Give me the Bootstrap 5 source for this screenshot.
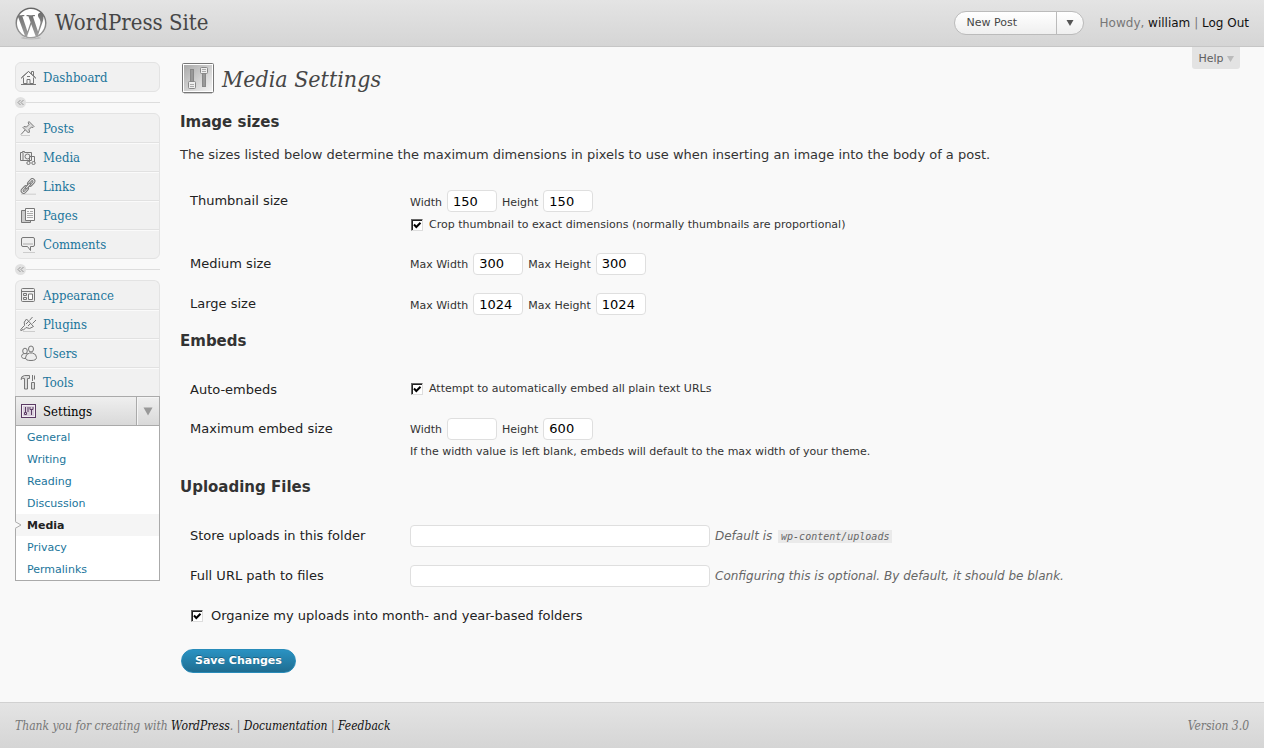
<!DOCTYPE html>
<html lang="en">
<head>
<meta charset="utf-8">
<meta name="viewport" content="width=device-width, initial-scale=1">
<title>Media Settings - WordPress Site</title>
<link rel="stylesheet" href="https://cdn.jsdelivr.net/npm/bootstrap@5.3.0/dist/css/bootstrap.min.css">
<style>
  body { font: 13px/20px Verdana, "DejaVu Sans", sans-serif; color: #333; background: #f9f9f9; }
  a { text-decoration: none; }
  .serif { font-family: Georgia, "DejaVu Serif Condensed", "DejaVu Serif", serif; }
  .bar { background: linear-gradient(#e4e4e4, #d5d5d5); min-height: 47px; padding: 0 15px; }
  .site-bar { border-bottom: 1px solid #c6c6c6; }
  .foot-bar { border-top: 1px solid #d1d1d1; min-height: 46px; color: #777; font-size: 12px; font-style: italic; }
  .foot-bar a { color: #111; }
  .site-title { font-size: 22px; line-height: 32px; color: #464646; }
  .pill { --bs-btn-font-size: 11px; --bs-btn-line-height: 16px; --bs-btn-padding-y: 3px; --bs-btn-padding-x: 12px;
    --bs-btn-color: #464646; --bs-btn-border-color: #bbb; --bs-btn-border-radius: 12px;
    background: linear-gradient(#fff, #efefef); }
  .pill-main { width: 103px; text-align: left; }
  .pill-arrow { --bs-btn-padding-x: 0; width: 28px; }
  .account { font-size: 12px; color: #777; }
  .account a { color: #111; }
  .help-tab { background: #e3e3e3; color: #606060; font-size: 11px; line-height: 16px; padding: 4px 6px 2px; border-radius: 0 0 3px 3px; margin-right: 24px; }

  .side { width: 145px; margin: 15px 20px 0 15px; flex: none; }
  .menu-box { border: 1px solid #e3e3e3; border-radius: 6px; background: #f1f1f1; }
  .menu-box > a, .current > a { color: #21759b; font-size: 13px; line-height: 26px; gap: 6px; padding: 2px 0 0 4px; }
  .menu-box > a + a { border-top: 1px solid #e1e1e1; box-shadow: inset 0 1px #fafafa; }
  .side a.serif svg { width: 17px; height: 17px; flex: none; margin-top: -2px; }
  .menu-open { border-bottom: 0; border-radius: 6px 6px 0 0; }
  .menu-sep { height: 21px; }
  .menu-sep hr { margin: 0; border-color: #ddd; opacity: 1; }
  .menu-sep button { width: 11px; height: 11px; padding: 0; border: 0; border-radius: 50%; background: #e1e1e1; }
  .current { border: 1px solid #aaa; background: linear-gradient(#efefef, #d9d9d9); }
  .current > a { color: #000; }
  .current > button { width: 23px; border: 0; border-left: 1px solid #aaa; background: none; box-shadow: inset 1px 1px #f5f5f5; padding: 0; }
  .submenu { border: 1px solid #aaa; border-top: 0; background: #fff; font-size: 11px; line-height: 20px; }
  .submenu a { color: #21759b; padding: 2px 0 0 11px; position: relative; }
  .submenu a.here { color: #222; background: #f5f5f5; font-weight: bold; }
  .here svg { position: absolute; left: -1px; top: 7px; }

  .page-title { font-size: 23px; line-height: 32px; font-style: italic; color: #464646; margin: 15px 0 10px; }
  h2 { font-size: 15px; line-height: 20px; font-weight: bold; margin: 6px 0 19px; }
  .page-title svg { margin-top: 0; }
  .intro { margin: -6px 0 16px; }
  .form-line { padding: 9px 10px; }
  .form-line > :first-child { width: 220px; flex: none; color: #222; padding-top: 1px; }
  .opt { font-size: 11px; gap: 5px; color: #333; }
  .opt + .opt { margin-top: 2px; }
  .text-in { height: 22px; padding: 1px 5px; border: 1px solid #dfdfdf; border-radius: 4px; background: #fff; font-size: 13px; line-height: 18px; color: #000; }
  .num { width: 50px; }
  .path-in { width: 300px; }
  .tick { appearance: none; width: 12px; height: 12px; margin: 0 1px 0 1px; border: 1px solid; border-color: #666 #ddd #ddd #666;
    box-shadow: inset 1px 1px #222; background: #fff url("data:image/svg+xml,%3Csvg xmlns='http://www.w3.org/2000/svg' viewBox='0 0 10 10'%3E%3Cpath d='M2 4.5 4.3 7 8.5 2.7' fill='none' stroke='%23000' stroke-width='2'/%3E%3C/svg%3E"); flex: none; }
  .hint { font-size: 12px; font-style: italic; color: #666; }
  .hint code { font: italic 10px/14px "DejaVu Sans Mono", monospace; color: #666; background: #eaeaea; padding: 1px 3px; margin-left: 2px; }
  .save { --bs-btn-font-size: 11px; --bs-btn-line-height: 16px; --bs-btn-padding-y: 3px; --bs-btn-padding-x: 13px; --bs-btn-border-radius: 12px;
    --bs-btn-color: #fff; --bs-btn-border-color: #298cba; --bs-btn-font-weight: bold; background: linear-gradient(#2a92c2, #1f6d91); text-shadow: 0 -1px rgba(0,0,0,.3); margin: 14px 0 24px 1px; }
</style>
</head>
<body class="d-flex flex-column min-vh-100">

<header class="bar site-bar d-flex align-items-center">
  <svg class="me-2" width="32" height="33" viewBox="0 0 32 33" aria-hidden="true">
    <defs><linearGradient id="wg" x1="0" y1="0" x2="0" y2="1"><stop offset="0" stop-color="#636363"/><stop offset="1" stop-color="#a2a2a2"/></linearGradient></defs>
    <ellipse cx="16" cy="31" rx="10" ry="1.500" fill="#bbb"/>
    <circle cx="16" cy="16" r="15.600" fill="#fff"/>
    <path transform="translate(.4 .4) scale(1.3)" fill="url(#wg)" d="M21.469 6.825c.84 1.537 1.318 3.3 1.318 5.175 0 3.979-2.156 7.456-5.363 9.325l3.295-9.527c.615-1.54.82-2.771.82-3.864 0-.405-.026-.78-.07-1.11m-7.981.105c.647-.03 1.232-.105 1.232-.105.582-.075.514-.93-.067-.899 0 0-1.755.135-2.88.135-1.064 0-2.85-.15-2.85-.15-.585-.03-.661.855-.075.885 0 0 .54.061 1.125.09l1.68 4.605-2.37 7.08L5.354 6.9c.649-.03 1.234-.1 1.234-.1.585-.075.516-.93-.065-.896 0 0-1.746.138-2.874.138-.2 0-.438-.008-.69-.015C4.911 3.15 8.235 1.215 12 1.215c2.809 0 5.365 1.072 7.286 2.833-.046-.003-.091-.009-.141-.009-1.06 0-1.812.923-1.812 1.914 0 .89.513 1.643 1.06 2.531.411.72.89 1.643.89 2.977 0 .915-.354 1.994-.821 3.479l-1.075 3.585-3.9-11.61.001.014zM12 22.784c-1.059 0-2.081-.153-3.048-.437l3.237-9.406 3.315 9.087c.024.053.05.101.078.149-1.12.393-2.325.609-3.582.609M1.211 12c0-1.564.336-3.05.935-4.39L7.29 21.709C3.694 19.96 1.212 16.271 1.211 12M12 0C5.385 0 0 5.385 0 12s5.385 12 12 12 12-5.385 12-12S18.615 0 12 0"/>
  </svg>
  <a href="#" class="site-title serif me-auto">WordPress Site</a>
  <div class="btn-group me-3">
    <button type="button" class="btn pill pill-main">New Post</button>
    <button type="button" class="btn pill pill-arrow" aria-label="More actions"><svg width="8" height="6" viewBox="0 0 8 6"><path d="M.5 0h7L4 6z" fill="#555"/></svg></button>
  </div>
  <div class="account">Howdy, <a href="#">william</a> | <a href="#">Log Out</a></div>
</header>

<div class="d-flex flex-grow-1">
  <nav class="side" aria-label="Main menu">
    <div class="menu-box">
      <a href="#" class="d-flex align-items-center serif"><svg viewBox="0 0 17 17" fill="#f5f5f5" stroke="#777"><path d="M3.5 8.500v6h10v-6M1 9.500l7.500-7 7.500 7M11.500 5V2.500h2V7"/><path d="M1.500 8.500l7-6 7 6" fill="none"/><path d="M7 14.500v-4h3v4M7 7.500h3M1 15.500h15"/></svg>Dashboard</a>
    </div>
    <div class="menu-sep d-flex align-items-center"><button type="button" aria-label="Collapse menu" class="d-flex align-items-center justify-content-center"><svg width="7" height="7" viewBox="0 0 7 7" fill="none" stroke="#999"><path d="M3.500 1 1 3.500 3.500 6M6.500 1 4 3.500 6.500 6"/></svg></button><hr class="flex-grow-1"></div>
    <div class="menu-box">
      <a href="#" class="d-flex align-items-center serif"><svg viewBox="0 0 17 17" fill="#ddd" stroke="#777"><path d="M1 14.500 5.500 9.500"/><path d="M9 1.500l5 5-1 1-1.500-.5-2.500 2.500.5 2.500-1 1L3 7.500l1-1 2.500.5L9 4.500l-.8-1.700z"/><path d="M1 15.500h9" stroke="#ccc"/></svg>Posts</a>
      <a href="#" class="d-flex align-items-center serif"><svg viewBox="0 0 17 17" fill="#eee" stroke="#777"><path d="M.5 3.500h2v-1h2v1h7v8H.5zM3 3.500v8"/><circle cx="7.500" cy="7.500" r="2.500"/><path d="M9.500 13.500v-6h5v6" fill="none"/><ellipse cx="8.500" cy="14" rx="1.700" ry="1.500"/><ellipse cx="13.500" cy="14" rx="1.700" ry="1.500"/></svg>Media</a>
      <a href="#" class="d-flex align-items-center serif"><svg viewBox="0 0 17 17" fill="none" stroke="#777"><path d="M1 16.200h15" stroke="#ccc"/><g transform="rotate(-48 8 8)"><rect x="-1" y="5.500" width="8.500" height="5" rx="2.500"/><rect x="8.500" y="5.500" width="8.500" height="5" rx="2.500"/><rect x="1" y="7.300" width="4" height="1.500" rx=".7"/><rect x="11" y="7.300" width="4" height="1.500" rx=".7"/><path d="M5 7h6v2H5z" fill="#eee"/></g></svg>Links</a>
      <a href="#" class="d-flex align-items-center serif"><svg viewBox="0 0 17 17" fill="#f8f8f8" stroke="#777"><path d="M1.500 3.500h9v12h-9z" fill="#ccc"/><path d="M5.500 1.500h9v12h-9z"/><path d="M7 4.500h2M10 4.500h3M7 6.500h6M7 8.500h6M7 10.500h6" stroke="#aaa"/></svg>Pages</a>
      <a href="#" class="d-flex align-items-center serif"><svg viewBox="0 0 17 17" fill="#eee" stroke="#777"><path d="M3 16.500h12" stroke="#ccc"/><path d="M3 1.500h10q1.500 0 1.500 1.500v6q0 1.500-1.500 1.500h-2.500v4l-3-4H3Q1.500 10.500 1.500 9V3Q1.500 1.500 3 1.500z"/><path d="M3 7h10v2H3z" fill="#ccc" stroke="none"/></svg>Comments</a>
    </div>
    <div class="menu-sep d-flex align-items-center"><button type="button" aria-label="Collapse menu" class="d-flex align-items-center justify-content-center"><svg width="7" height="7" viewBox="0 0 7 7" fill="none" stroke="#999"><path d="M3.500 1 1 3.500 3.500 6M6.500 1 4 3.500 6.500 6"/></svg></button><hr class="flex-grow-1"></div>
    <div class="menu-box menu-open">
      <a href="#" class="d-flex align-items-center serif"><svg viewBox="0 0 17 17" fill="#eee" stroke="#777"><rect x="1.500" y="1.500" width="13" height="13" rx="1"/><path d="M1.500 4.500h13M3.500 6.500h3v2h-3zM3.500 10.500h3v2h-3z"/><path d="M8.500 7h4v5.500h-4z" fill="#fff"/></svg>Appearance</a>
      <a href="#" class="d-flex align-items-center serif"><svg viewBox="0 0 17 17" fill="#eee" stroke="#777"><path d="M3 15.500h12" stroke="#ccc"/><path d="M9.500 4.500 12.500 1M12.500 7.500 16 4M6.500 3l7 7.500q-4 3.500-7.500 1L3.500 14l-1-.5-1 1.500-1-1 1.500-2 2.500-2.500Q3 6 6.500 3zM6 8l3-3M8 10l3-3"/></svg>Plugins</a>
      <a href="#" class="d-flex align-items-center serif"><svg viewBox="0 0 17 17" fill="#eee" stroke="#777"><ellipse cx="11" cy="4" rx="2.500" ry="3"/><path d="M1.500 11.500q0-2.500 2.500-3 4-1 5 2.500l-1 2q-6 1.500-6.500-1.500z"/><ellipse cx="5" cy="6" rx="2.300" ry="2.800"/><path d="M5.500 13q0-4 4-5h3q4 1 4 4.500 0 3-5.500 3t-5.500-2.500z"/></svg>Users</a>
      <a href="#" class="d-flex align-items-center serif"><svg viewBox="0 0 17 17" fill="#ddd" stroke="#777"><path d="M1 5.500Q1 2 4.500 1.500h5v3h-2v10.500h-3V4.500Q2.500 3.500 1 5.500z"/><path d="M12.500 1v6M11.500 8.500h3v6.500h-3zM14.500 1.500v4"/></svg>Tools</a>
    </div>
    <div class="current d-flex">
      <a href="#" class="d-flex align-items-center flex-grow-1 serif"><svg viewBox="0 0 17 17" fill="none" stroke="#5a3a63"><rect x="1.500" y="1.500" width="14" height="13" fill="#d8cedb"/><rect x="2.500" y="2.500" width="12" height="11" stroke="#f2edf3"/><path d="M5.500 4v5M4.500 9.500h2v2h-2zM11.500 7v5M10 4v2.500h3V4M8 4v5"/></svg>Settings</a>
      <button type="button" class="d-flex align-items-center justify-content-center" aria-label="Toggle submenu"><svg width="10" height="9" viewBox="0 0 10 9"><path d="M.5.500h9L5 8.500z" fill="#999"/></svg></button>
    </div>
    <div class="submenu d-flex flex-column">
      <a href="#">General</a>
      <a href="#">Writing</a>
      <a href="#">Reading</a>
      <a href="#">Discussion</a>
      <a href="#" class="here" aria-current="page"><svg width="7" height="8" viewBox="0 0 7 8"><path d="M0 0l6 4-6 4z" fill="#f9f9f9"/><path d="M0 .5 6 4 0 7.500" fill="none" stroke="#aaa"/></svg>Media</a>
      <a href="#">Privacy</a>
      <a href="#">Permalinks</a>
    </div>
  </nav>

  <main class="flex-grow-1">
    <div class="d-flex align-items-start justify-content-between">
      <h1 class="page-title serif d-flex align-items-center gap-2"><svg width="34" height="34" viewBox="0 0 34 34" aria-hidden="true"><defs><linearGradient id="sg" x1="0" y1="0" x2="1" y2="1"><stop offset="0" stop-color="#aaa"/><stop offset="1" stop-color="#f4f4f4"/></linearGradient></defs><path d="M4 31.500h28" stroke="#ccc"/><rect x="2.500" y="1.500" width="31" height="29" rx="1" fill="#fff" stroke="#777"/><rect x="4" y="3" width="28" height="26" fill="url(#sg)"/><g stroke="#888"><rect x="10.500" y="7.500" width="3" height="12" fill="#999"/><rect x="8.500" y="19.500" width="7" height="7" rx="1" fill="#eee"/><path d="M10 22.500h4M10 24.500h4" stroke="#aaa"/><rect x="22.500" y="11.500" width="3" height="13" fill="#999"/><rect x="20.500" y="5.500" width="7" height="6" rx="1" fill="#eee"/><path d="M22 7.500h4M22 9.500h4" stroke="#aaa"/></g></svg><span>Media Settings</span></h1>
      <button type="button" class="help-tab border-0">Help <svg width="7" height="6" viewBox="0 0 7 6"><path d="M0 0h7L3.500 6z" fill="#bbb"/></svg></button>
    </div>
    <form>
      <h2>Image sizes</h2>
      <p class="intro">The sizes listed below determine the maximum dimensions in pixels to use when inserting an image into the body of a post.</p>
      <div class="form-line d-flex">
        <div>Thumbnail size</div>
        <div>
          <div class="opt d-flex align-items-baseline"><label for="tw">Width</label><input id="tw" class="text-in num" value="150"><label for="th">Height</label><input id="th" class="text-in num" value="150"></div>
          <div class="opt d-flex align-items-center"><input type="checkbox" class="tick" id="crop" checked><label for="crop">Crop thumbnail to exact dimensions (normally thumbnails are proportional)</label></div>
        </div>
      </div>
      <div class="form-line d-flex">
        <div>Medium size</div>
        <div class="opt d-flex align-items-baseline"><label for="mw">Max Width</label><input id="mw" class="text-in num" value="300"><label for="mh">Max Height</label><input id="mh" class="text-in num" value="300"></div>
      </div>
      <div class="form-line d-flex">
        <div>Large size</div>
        <div class="opt d-flex align-items-baseline"><label for="lw">Max Width</label><input id="lw" class="text-in num" value="1024"><label for="lh">Max Height</label><input id="lh" class="text-in num" value="1024"></div>
      </div>

      <h2>Embeds</h2>
      <div class="form-line d-flex">
        <div>Auto-embeds</div>
        <div class="opt d-flex align-items-center"><input type="checkbox" class="tick" id="auto" checked><label for="auto">Attempt to automatically embed all plain text URLs</label></div>
      </div>
      <div class="form-line d-flex">
        <div>Maximum embed size</div>
        <div>
          <div class="opt d-flex align-items-baseline"><label for="ew">Width</label><input id="ew" class="text-in num"><label for="eh">Height</label><input id="eh" class="text-in num" value="600"></div>
          <div class="opt">If the width value is left blank, embeds will default to the max width of your theme.</div>
        </div>
      </div>

      <h2>Uploading Files</h2>
      <div class="form-line d-flex">
        <label for="dir">Store uploads in this folder</label>
        <div class="opt d-flex align-items-center"><input id="dir" class="text-in path-in"><span class="hint">Default is <code>wp-content/uploads</code></span></div>
      </div>
      <div class="form-line d-flex">
        <label for="url">Full URL path to files</label>
        <div class="opt d-flex align-items-center"><input id="url" class="text-in path-in"><span class="hint">Configuring this is optional. By default, it should be blank.</span></div>
      </div>
      <div class="form-line">
        <span class="d-flex align-items-center gap-2 w-auto"><input type="checkbox" class="tick me-0" id="org" checked><label for="org">Organize my uploads into month- and year-based folders</label></span>
      </div>
      <button type="submit" class="btn save">Save Changes</button>
    </form>
  </main>
</div>

<footer class="bar foot-bar serif d-flex align-items-center justify-content-between">
  <div>Thank you for creating with <a href="#">WordPress</a>. | <a href="#">Documentation</a> | <a href="#">Feedback</a></div>
  <div>Version 3.0</div>
</footer>

<script src="https://cdn.jsdelivr.net/npm/bootstrap@5.3.0/dist/js/bootstrap.bundle.min.js"></script>
</body>
</html>
